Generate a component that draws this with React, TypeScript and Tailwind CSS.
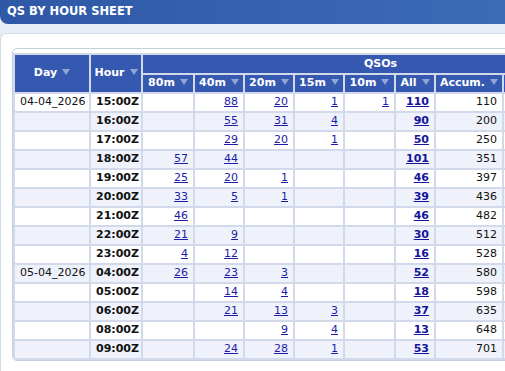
const BANDS = ["80m", "40m", "20m", "15m", "10m"];

type Row = {
  day?: string;
  hour: string;
  bands: (number | null)[];
  all: number;
  accum: number;
};

const ROWS: Row[] = [
  { day: "04-04_2026", hour: "15:00Z", bands: [null, 88, 20, 1, 1], all: 110, accum: 110 },
  { hour: "16:00Z", bands: [null, 55, 31, 4, null], all: 90, accum: 200 },
  { hour: "17:00Z", bands: [null, 29, 20, 1, null], all: 50, accum: 250 },
  { hour: "18:00Z", bands: [57, 44, null, null, null], all: 101, accum: 351 },
  { hour: "19:00Z", bands: [25, 20, 1, null, null], all: 46, accum: 397 },
  { hour: "20:00Z", bands: [33, 5, 1, null, null], all: 39, accum: 436 },
  { hour: "21:00Z", bands: [46, null, null, null, null], all: 46, accum: 482 },
  { hour: "22:00Z", bands: [21, 9, null, null, null], all: 30, accum: 512 },
  { hour: "23:00Z", bands: [4, 12, null, null, null], all: 16, accum: 528 },
  { day: "05-04_2026", hour: "04:00Z", bands: [26, 23, 3, null, null], all: 52, accum: 580 },
  { hour: "05:00Z", bands: [null, 14, 4, null, null], all: 18, accum: 598 },
  { hour: "06:00Z", bands: [null, 21, 13, 3, null], all: 37, accum: 635 },
  { hour: "08:00Z", bands: [null, null, 9, 4, null], all: 13, accum: 648 },
  { hour: "09:00Z", bands: [null, 24, 28, 1, null], all: 53, accum: 701 },
];

function Arrow() {
  return (
    <svg width="8" height="6" viewBox="0 0 8 6" className="inline-block ml-[5px] mb-[2px]">
      <path d="M0 0 H8 L4 6 Z" fill="#91a6d6" />
    </svg>
  );
}

function Head({ label, rowSpan }: { label?: string; rowSpan?: number }) {
  return (
    <th
      rowSpan={rowSpan}
      className="bg-[#3558b1] text-white font-bold text-center whitespace-nowrap overflow-hidden p-0 h-[17px]"
    >
      {label}
      {label && <Arrow />}
    </th>
  );
}

export default function App() {
  return (
    <div
      className="w-[505px] h-[371px] overflow-hidden bg-[#e8ecf5] text-[11px] text-[#111]"
      style={{ fontFamily: '"DejaVu Sans", Verdana, sans-serif' }}
    >
      <div className="h-6 w-[560px] flex items-center pl-[7px] rounded-bl-[8px] bg-gradient-to-r from-[#2f58a7] to-[#3d6db8] text-white font-bold text-[11.5px]">
        QS BY HOUR SHEET
      </div>
      <div className="mt-[9px] w-[700px] h-[400px] bg-white border-l border-t border-[#d3dae9] rounded-tl-[6px] pl-[11px] pt-[14px]">
        <div className="w-[609px] border border-[#c6cee2] rounded-[5px] pt-[4px] bg-white overflow-hidden">
          <table
            className="w-[607px] table-fixed border-separate bg-[#d2d9ea]"
            style={{ borderSpacing: "2px" }}
          >
            <colgroup>
              <col className="w-[74px]" />
              <col className="w-[50px]" />
              <col className="w-[50px]" />
              <col className="w-[48px]" />
              <col className="w-[48px]" />
              <col className="w-[48px]" />
              <col className="w-[49px]" />
              <col className="w-[38px]" />
              <col className="w-[66px]" />
              <col className="w-[56px]" />
              <col className="w-[56px]" />
            </colgroup>
            <thead>
              <tr>
                <Head label="Day" rowSpan={2} />
                <Head label="Hour" rowSpan={2} />
                <th colSpan={9} className="bg-[#3558b1] text-white font-bold text-center p-0 h-[18px]">
                  QSOs
                </th>
              </tr>
              <tr>
                {BANDS.map((b) => (
                  <Head key={b} label={b} />
                ))}
                <Head label="All" />
                <Head label="Accum." />
                <Head />
                <Head />
              </tr>
            </thead>
            <tbody>
              {ROWS.map((r, i) => (
                <tr key={r.hour} className={i % 2 ? "bg-[#eff2fb]" : "bg-white"}>
                  <td className="h-[17px] pl-[5px] whitespace-nowrap overflow-hidden">{r.day}</td>
                  <td className="pl-[5px] font-bold whitespace-nowrap overflow-hidden">{r.hour}</td>
                  {r.bands.map((v, j) => (
                    <td key={j} className="text-right pr-[5px]">
                      {v !== null && <a className="text-[#1c1ca6] underline">{v}</a>}
                    </td>
                  ))}
                  <td className="text-right pr-[5px]">
                    <a className="text-[#14149c] underline font-bold">{r.all}</a>
                  </td>
                  <td className="text-right pr-[5px]">{r.accum}</td>
                  <td></td>
                  <td></td>
                </tr>
              ))}
            </tbody>
          </table>
        </div>
      </div>
    </div>
  );
}
